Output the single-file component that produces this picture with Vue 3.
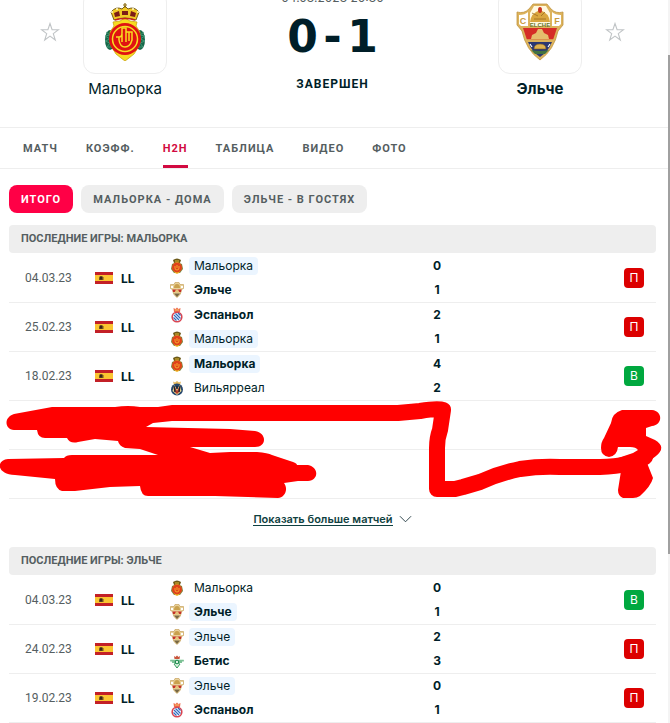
<template>
  <div class="page">
    <svg class="sprite" aria-hidden="true">
      <symbol id="star" viewBox="0 0 20 20">
        <path d="M10 1.5l2.1 6.2h6.4l-5.2 3.9 2 6.4-5.3-3.9-5.3 3.9 2-6.4-5.2-3.9h6.4z" fill="none" stroke="#c0c4c6" stroke-width="1.1" />
      </symbol>

      <symbol id="mallorca-small" viewBox="0 0 14 16">
        <path d="M3 2q4-3 8 0l-1 3H4z" fill="#6c5918" />
        <path d="M5 3h4" stroke="#e5bb32" />
        <path d="M2 6l5-2 5 2 1 5-3 4H4l-3-4z" fill="#7d8540" />
        <path d="M4 5l3-1 3 1 2 5-3 5-2 1-2-1-3-5z" fill="#efba28" />
        <circle cx="7" cy="9.5" r="5" fill="#df431b" />
        <path d="M5 8v2q0 2 2 2t2-2V8M7 7v3" fill="none" stroke="#f8a62c" />
      </symbol>

      <symbol id="elche-small" viewBox="0 0 14 16">
        <path d="M5 .5h4l1 2 3.500 0v4l-2 1q0 5-4.500 8-4.500-3-4.500-8l-2-1v-4L4 2.500z" fill="#e8d199" stroke="#c7a45e" stroke-width=".7" />
        <path d="M1 4h2v2H1zM11 4h2v2h-2z" fill="#fff" />
        <path d="M4 6q0-4 3-4t3 4z" fill="#c9a14e" />
        <path d="M2.500 7.500h9L11 10H3z" fill="#c52f28" />
        <path d="M6 7.500h2l1.500 3h-5z" fill="#e6c27a" />
        <path d="M4 11.500h6L7 15z" fill="#776745" />
      </symbol>

      <symbol id="espanyol" viewBox="0 0 14 16">
        <path d="M3.500 1l2 1L7 .5 8.500 2l2-1-.5 4H4z" fill="#ee6c4d" />
        <path d="M5 3h4" stroke="#f4c66a" />
        <circle cx="7" cy="10" r="5.600" fill="#d94450" />
        <circle cx="7" cy="10" r="4" fill="#fff" />
        <path d="M4 8l5 5M5.500 6.500l5 5M3.500 10.500l3 3M8 6l2.500 2.500" stroke="#2f6cc0" stroke-width="1.200" />
      </symbol>

      <symbol id="villarreal" viewBox="0 0 14 16">
        <path d="M3 1.500l2 1 2-1.500 2 1.500 2-1L10 5H4z" fill="#e4b85d" />
        <circle cx="7" cy="9.500" r="6" fill="#24466e" />
        <path d="M4 5l3 4 3-4 1.500 6L7 15l-4.500-4z" fill="#e9d68f" />
        <path d="M5 7l2 4 2-4 1 4-3 3-3-3z" fill="#b53b28" />
        <path d="M4 6l1 6M10 6l-1 6M7 6v3" stroke="#1d2430" stroke-width="1.400" />
      </symbol>

      <symbol id="betis" viewBox="0 0 14 16">
        <path d="M4 3l1.500 1L7 2.500 8.500 4 10 3l-.5 3h-5z" fill="#c9553c" />
        <path d="M0 6h14l-2.500 4H10l-3 5-3-5H2.500z" fill="#d9efdf" />
        <path d="M1 7v1.500M3 7v3M5 7v4M9 7v4M11 7v3M13 7v1.500" stroke="#2f9a57" stroke-width="1.100" />
        <path d="M4 11l3 4 3-4" fill="none" stroke="#2f9a57" />
        <circle cx="7" cy="9" r="1.800" fill="none" stroke="#17864a" />
      </symbol>

      <symbol id="spain" viewBox="0 0 18 12">
        <path d="M0 0h18v12H0z" fill="#c32027" />
        <path d="M0 3h18v6H0z" fill="#fbc531" />
        <path d="M4 8V5.500L5 4h2l1.500 1.500V8z" fill="#70521f" />
        <path d="M5 5h2v2.500H5z" fill="#3a2518" />
      </symbol>
    </svg>

    <header class="match-header">
      <button class="favorite" type="button" aria-label="Мальорка"><svg><use href="#star" /></svg></button>
      <div class="team">
        <a class="logo" href="#">
          <svg class="logo-mallorca" viewBox="0 0 42 58">
            <ellipse cx="6" cy="37" rx="5" ry="10" fill="#17684a" />
            <ellipse cx="36" cy="37" rx="5" ry="10" fill="#17684a" />
            <path d="M2 29l4 3-5 1 5 3-5 2 5 2-3 4 5 0M40 29l-4 3 5 1-5 3 5 2-5 2 3 4-5 0" fill="none" stroke="#4aa17d" stroke-width=".8" />
            <path d="M21 15l5 3 7 1-1 4 4 6-1 14-5 8-5 4-4 3-4-3-5-4-5-8-1-14 4-6-1-4 7-1z" fill="#f7dc20" stroke="#c9a413" stroke-width=".8" />
            <path d="M10 17L7 9q5-6 11-3l3-3 3 3q6-3 11 3l-3 8q-11-4-22 0z" fill="#f2c926" stroke="#6a5010" stroke-width=".9" />
            <path d="M11 14l-1-4 5-2 1 5zM18 12V8h6v4zM26 13l1-5 5 2-1 4z" fill="#7d1d17" />
            <g fill="#fff8cf">
              <circle cx="8" cy="9" r="1" /><circle cx="13" cy="6" r="1" /><circle cx="29" cy="6" r="1" /><circle cx="34" cy="9" r="1" />
            </g>
            <path d="M21 0v5M19 2h4" stroke="#8a6a10" stroke-width="1.2" />
            <path d="M11 17q10-3 20 0" fill="none" stroke="#c81d1d" stroke-width="1.5" />
            <circle cx="21" cy="36" r="16" fill="#e01212" />
            <circle cx="21" cy="36" r="12.5" fill="none" stroke="#f7dc20" stroke-width="1.5" />
            <path d="M12 34h3q3 0 3-4v-5h4v14M15 34v3q1 7 6 7t7-7v-8h-3v9M22 29h4M18 31v8" fill="none" stroke="#f7dc20" stroke-width="1.5" />
          </svg>
        </a>
        <a class="team-name" href="#">Мальорка</a>
      </div>
      <div class="summary">
        <time>04.03.2023 20:30</time>
        <div class="score"><span>0</span><span class="dash">-</span><span>1</span></div>
        <div class="status">ЗАВЕРШЕН</div>
      </div>
      <div class="team">
        <a class="logo" href="#">
          <svg class="logo-elche" viewBox="0 0 48 58">
            <path d="M17 1h14l4 5q5 5 12 3v13l-5 6q-4 19-18 29Q10 47 6 28l-5-6V9q7 2 12-3z" fill="#dcb35c" stroke="#c2943f" stroke-width=".8" />
            <path d="M3 12q6 0 9-3v14H5l-2-2zM45 12q-6 0-9-3v14h7l2-2z" fill="#fff" />
            <path d="M18 3h12l4 7v13H14V10z" fill="#fff8df" />
            <path d="M7 25h34l-4 12H11z" fill="#d52c26" />
            <path d="M12 39h24q-4 10-12 15-8-5-12-15z" fill="#2b3873" />
            <path d="M15 47q9 2 18 0l-4 4H19z" fill="#427340" />
            <path d="M14 19q1-9 10-12 9 3 10 12z" fill="#d9a63e" />
            <path d="M16 10l6 3M29 9l-4 4M18 16h12" stroke="#9b6b1e" stroke-width=".8" />
            <ellipse cx="24" cy="7" rx="2" ry="3" fill="#c8331e" />
            <path d="M22 26h4l2 4 4 2 1 4H15l1-4 4-2z" fill="#e5bd6d" />
            <path d="M10 37.500h28" stroke="#dcb35c" stroke-width="2.5" />
            <path d="M18 46q0-5 6-5t6 5z" fill="#dfb34e" stroke="#7c5b27" stroke-width=".6" />
            <path d="M14 41l2 3M34 41l-2 3" stroke="#fff" stroke-width="1.2" />
            <text x="7" y="21" class="crest-letter">C</text>
            <text x="41" y="21" class="crest-letter">F</text>
            <text x="24" y="24" class="crest-word">ELCHE</text>
          </svg>
        </a>
        <a class="team-name bold" href="#">Эльче</a>
      </div>
      <button class="favorite" type="button" aria-label="Эльче"><svg><use href="#star" /></svg></button>
    </header>

    <nav class="tabs">
      <a v-for="tab in tabs" :key="tab" href="#" :class="{ active: tab === 'H2H' }">{{ tab }}</a>
    </nav>

    <main class="content">
      <div class="filters">
        <button
          v-for="filter in filters"
          :key="filter"
          type="button"
          :class="{ active: filter === activeFilter }"
          @click="activeFilter = filter"
        >{{ filter }}</button>
      </div>

      <section v-for="section in sections" :key="section.title" class="section">
        <h2>{{ section.title }}</h2>
        <table>
          <tbody>
            <tr v-for="match in section.matches" :key="match.date">
              <td class="date">{{ match.date }}</td>
              <td class="league">
                <div><svg class="flag"><use href="#spain" /></svg><b>LL</b></div>
              </td>
              <td class="teams">
                <div v-for="team in match.teams" :key="team.name" class="participant">
                  <svg class="crest"><use :href="'#' + team.crest" /></svg>
                  <span :class="{ bold: team.winner, marked: team.name === section.team }">{{ team.name }}</span>
                </div>
              </td>
              <td class="goals">
                <div v-for="team in match.teams" :key="team.name">{{ team.goals }}</div>
              </td>
              <td class="result"><span :class="{ win: match.result === 'В' }">{{ match.result }}</span></td>
            </tr>
          </tbody>
        </table>

        <template v-if="section.covered">
          <div class="covered">
            <div class="covered-row"></div>
            <div class="covered-row"></div>
            <svg class="marker" viewBox="0 401 670 98" preserveAspectRatio="none" aria-hidden="true">
              <path d="M14 414L52 407 115 407Q128 405 140 407L158 407 172 405H335L335 421H172L153 423 146 427 230 429 255 431C267 433 267 447 255 447H190L210 453 230 452H257Q268 453 272 455L290 461Q297 463 297 465H308C319 467 319 480 308 481L298 481 284 483C289 490 284 498 278 498L215 496H148Q141 496 140 486L110 487 75 491H62Q55 489 55 479L15 475C-4 474-4 460 8 459L64 458Q66 455 72 455L158 455 140 449 125 448Q119 446 118 441L95 439 78 442Q70 444 67 438H45Q38 438 37 430H14C4 429 4 417 14 414Z" />
              <path d="M330 413H362L398 413 420 411Q438 408 443 410L440 430Q437 438 437 448V489H455L463 487 480 482Q500 473 520 469 540 466 560 467H600Q632 466 645 457" class="stroke" />
              <path d="M622 410H652C663 411 663 425 652 426L646 428V436L655 440Q667 447 656 456L647 463 653 478Q651 486 640 496 637 498 633 498H623Q618 496 618 490L621 471 615 459 633 453 638 450Q636 447 630 447H618Q617 456 609 457 601 456 601 448 601 442 604 438L611 423Q612 413 622 410Z" />
            </svg>
          </div>
          <a class="more" href="#">
            <span>Показать больше матчей</span>
            <svg viewBox="0 0 14 8"><path d="M1 1l6 6 6-6" fill="none" stroke="#243b42" /></svg>
          </a>
        </template>
      </section>
    </main>

    <div class="scroll-track"><div class="scroll-thumb"></div></div>
  </div>
</template>

<script setup>
import { ref } from 'vue'

const tabs = ['МАТЧ', 'КОЭФФ.', 'H2H', 'ТАБЛИЦА', 'ВИДЕО', 'ФОТО']
const filters = ['ИТОГО', 'МАЛЬОРКА - ДОМА', 'ЭЛЬЧЕ - В ГОСТЯХ']
const activeFilter = ref('ИТОГО')

const crests = {
  'Мальорка': 'mallorca-small',
  'Эльче': 'elche-small',
  'Эспаньол': 'espanyol',
  'Вильярреал': 'villarreal',
  'Бетис': 'betis'
}

const match = (date, home, homeGoals, away, awayGoals, result) => ({
  date,
  result,
  teams: [
    { name: home, goals: homeGoals, crest: crests[home], winner: homeGoals > awayGoals },
    { name: away, goals: awayGoals, crest: crests[away], winner: awayGoals > homeGoals }
  ]
})

const sections = [
  {
    title: 'ПОСЛЕДНИЕ ИГРЫ: МАЛЬОРКА',
    team: 'Мальорка',
    covered: true,
    matches: [
      match('04.03.23', 'Мальорка', 0, 'Эльче', 1, 'П'),
      match('25.02.23', 'Эспаньол', 2, 'Мальорка', 1, 'П'),
      match('18.02.23', 'Мальорка', 4, 'Вильярреал', 2, 'В')
    ]
  },
  {
    title: 'ПОСЛЕДНИЕ ИГРЫ: ЭЛЬЧЕ',
    team: 'Эльче',
    covered: false,
    matches: [
      match('04.03.23', 'Мальорка', 0, 'Эльче', 1, 'В'),
      match('24.02.23', 'Эльче', 2, 'Бетис', 3, 'П'),
      match('19.02.23', 'Эльче', 0, 'Эспаньол', 1, 'П')
    ]
  }
]
</script>

<style>
body {
  margin: 0;
  background: #fff;
}
</style>

<style scoped>
.page {
  position: relative;
  overflow: hidden;
  background: #fff;
  color: #001e28;
  font-family: Inter, Roboto, "Liberation Sans", sans-serif;
  font-size: 12px;
}

.page * {
  box-sizing: border-box;
}

.sprite {
  position: absolute;
  width: 0;
  height: 0;
}

.crest-letter,
.crest-word {
  font-family: "Liberation Sans", sans-serif;
  font-weight: 700;
  text-anchor: middle;
}

.crest-letter {
  font-size: 9px;
  fill: #c99b40;
}

.crest-word {
  font-size: 6px;
  fill: #68762c;
}

a {
  color: inherit;
  text-decoration: none;
}

button {
  padding: 0;
  border: 0;
  font: inherit;
  cursor: pointer;
}

.bold {
  font-weight: 700;
}

/* the header is partly scrolled out of view */
.match-header {
  display: flex;
  align-items: flex-start;
  justify-content: space-between;
  height: 137px;
  margin-top: -10px;
  padding: 0 43px 0 38px;
}

.favorite {
  width: 24px;
  height: 24px;
  margin-top: 30px;
  background: none;
}

.favorite svg {
  display: block;
  width: 20px;
  height: 20px;
  margin: auto;
}

.team {
  display: flex;
  flex-direction: column;
  align-items: center;
  width: 126px;
}

.logo {
  display: flex;
  align-items: flex-end;
  justify-content: center;
  width: 84px;
  height: 84px;
  padding-bottom: 12px;
  border: 1px solid #eee;
  border-radius: 12px;
}

.logo-mallorca {
  width: 42px;
  height: 58px;
}

.logo-elche {
  width: 48px;
  height: 58px;
}

.team-name {
  margin-top: 4px;
  font-size: 15px;
  line-height: 22px;
}

.summary {
  display: flex;
  flex: 1;
  flex-direction: column;
  align-items: center;
}

time {
  color: #555e61;
  line-height: 16px;
}

.score {
  display: flex;
  margin-top: 5px;
  font-family: "DejaVu Sans", sans-serif;
  font-size: 44px;
  font-weight: 700;
  line-height: 52px;
}

.score span {
  width: 30px;
  display: flex;
  justify-content: center;
}

.score .dash {
  font-family: "DejaVu Sans Mono", monospace;
}

.status {
  margin-top: 13px;
  font-family: Roboto, sans-serif;
  font-size: 12px;
  font-weight: 700;
  letter-spacing: 1px;
  line-height: 16px;
}

.tabs {
  display: flex;
  gap: 28px;
  height: 42px;
  padding: 0 23px;
  border-top: 1px solid #eee;
  border-bottom: 1px solid #eee;
}

.tabs a {
  display: flex;
  align-items: center;
  border-bottom: 3px solid transparent;
  border-radius: 2px 2px 0 0;
  padding-top: 3px;
  color: #555e61;
  font-family: Roboto, sans-serif;
  font-size: 11px;
  font-weight: 700;
  letter-spacing: 1px;
}

.tabs .active {
  border-color: #d20a41;
  color: #d20a41;
}

.content {
  padding: 16px 14px 0 9px;
}

.filters {
  display: flex;
  gap: 8px;
  margin-bottom: 12px;
}

.filters button {
  height: 28px;
  padding: 0 12px;
  border-radius: 8px;
  background: #eee;
  color: #555e61;
  font-family: Roboto, sans-serif;
  font-size: 11px;
  font-weight: 700;
  letter-spacing: 1px;
}

.filters .active {
  background: #ff0046;
  color: #fff;
}

h2 {
  margin: 0 0 1px;
  padding: 0 12px;
  border-radius: 4px;
  background: #eee;
  color: #555e61;
  font-family: Roboto, sans-serif;
  font-size: 11px;
  font-weight: 700;
  line-height: 28px;
}

table {
  width: 100%;
  table-layout: fixed;
  border-spacing: 0;
}

td {
  height: 49px;
  padding: 0;
  border-bottom: 1px solid #eee;
}

.date {
  width: 86px;
  padding-left: 16px;
  color: #555e61;
  font-family: Roboto, sans-serif;
}

.league {
  width: 74px;
}

.league div {
  display: flex;
  align-items: center;
  gap: 8px;
}

.flag {
  width: 18px;
  height: 12px;
}

.participant {
  display: flex;
  align-items: center;
  gap: 4px;
  height: 24px;
}

.crest {
  width: 16px;
  height: 16px;
}

.participant span {
  padding: 0 5px;
  border-radius: 4px;
  line-height: 18px;
}

.participant .marked {
  background: #ebf5ff;
}

.goals {
  width: 40px;
  font-weight: 700;
  line-height: 24px;
  text-align: center;
}

.result {
  width: 199px;
  padding-right: 12px;
}

.result span {
  display: block;
  width: 20px;
  margin-left: auto;
  border-radius: 4px;
  background: #dc0000;
  color: #fff;
  line-height: 20px;
  text-align: center;
}

.result .win {
  background: #00a83f;
}

.covered {
  position: relative;
}

.covered-row {
  height: 49px;
  border-bottom: 1px solid #eee;
}

.marker {
  position: absolute;
  top: 0;
  left: -9px;
  width: calc(100% + 23px);
  height: 100%;
  overflow: visible;
  fill: #f00;
}

.stroke {
  fill: none;
  stroke: #f00;
  stroke-width: 16px;
  stroke-linecap: round;
  stroke-linejoin: round;
}

.more {
  display: flex;
  align-items: center;
  justify-content: center;
  gap: 6px;
  height: 40px;
  margin-bottom: 8px;
  color: #0f4141;
  font-size: 11px;
  font-weight: 600;
}

.more span {
  border-bottom: 1px solid currentColor;
  line-height: 12px;
}

.more svg {
  width: 13px;
  height: 8px;
}

.scroll-track {
  position: absolute;
  top: 0;
  right: 0;
  width: 2px;
  height: 100%;
  background: #f4f4f4;
}

.scroll-thumb {
  height: 69%;
  margin-top: 55px;
  background: #a0a0a0;
}
</style>
